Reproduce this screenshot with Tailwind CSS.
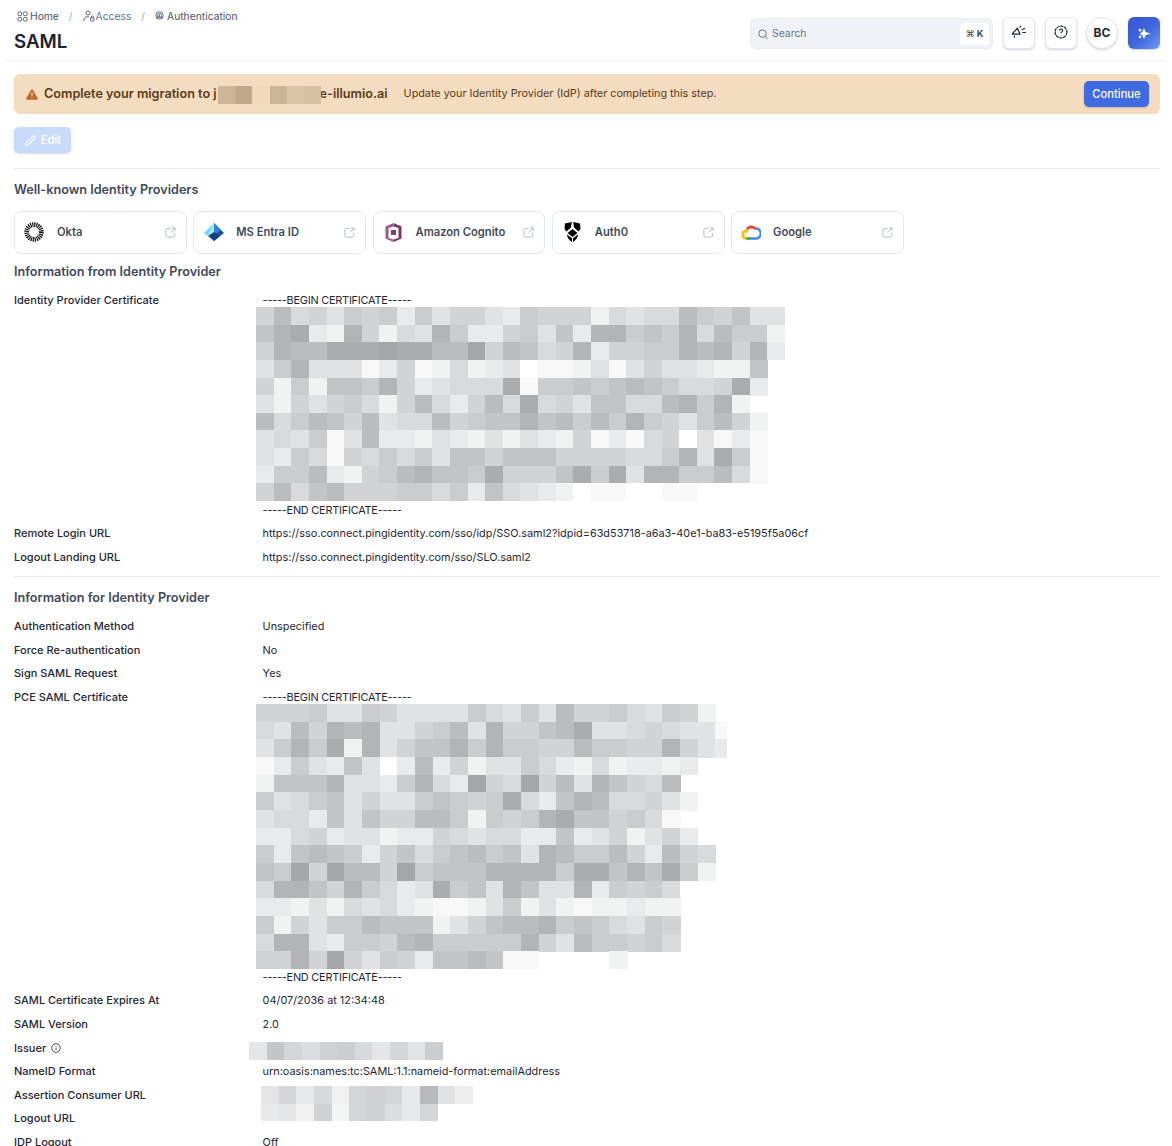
<!doctype html>
<html>
<head>
<meta charset="utf-8">
<script src="https://cdn.jsdelivr.net/npm/@tailwindcss/browser@4"></script>
</head>
<body class="bg-white">
<div class="w-[1172px] h-[1146px] overflow-hidden font-['Inter',sans-serif] text-[11px] leading-[14px] text-[#1f2733]">

  <header class="mx-[6px] h-[61px] border-b border-[#eef0f3] flex justify-between">
    <div class="pl-[8px]">
      <nav class="flex items-center h-[14px] mt-[9px] pl-[3px] text-[#4a5568] text-[10.3px]">
        <svg class="w-[11px] h-[11px] mr-[2px]" viewBox="0 0 12 12" fill="none" stroke="#4a5568" stroke-width="1"><rect x="1" y="1" width="4" height="4" rx="1.4"/><rect x="7" y="1" width="4" height="4" rx="1.4"/><rect x="1" y="7" width="4" height="4" rx="1.4"/><rect x="7" y="7" width="4" height="4" rx="1.4"/></svg>
        <span>Home</span>
        <span class="ml-[10px] mr-[10px] text-[#a0aec0]">/</span>
        <svg class="w-[12px] h-[12px] mr-[1px]" viewBox="0 0 12 12" fill="none" stroke="#4a5568" stroke-width="0.9"><circle cx="5" cy="3" r="2"/><path d="M1 11v-1.500a3.500 3 0 0 1 5-2.500"/><rect x="7.500" y="8" width="3.500" height="3" rx="0.600"/><path d="M8.300 8V7a1 1 0 0 1 2 0v1"/></svg>
        <span class="text-[#64748b]">Access</span>
        <span class="ml-[10px] mr-[10px] text-[#a0aec0]">/</span>
        <svg class="w-[9px] h-[9px] mr-[3px] -mt-[2px]" viewBox="0 0 12 12" fill="none" stroke="#4a5568" stroke-width="1.100"><circle cx="6" cy="6" r="5"/><circle cx="6" cy="6" r="2.800"/><path d="M6 4.500v4M3 10l1-4M9 10l-.5-3"/></svg>
        <span>Authentication</span>
      </nav>
      <h1 class="text-[18.7px] leading-[24px] font-semibold mt-[7px] text-[#1c2430]">SAML</h1>
    </div>
    <div class="flex items-start pt-[17px] pr-[6px]">
      <div class="w-[243px] h-[31px] mt-[1px] rounded-[6px] bg-[#eff2f6] flex items-center pl-[8px] pr-[4px] shadow-[inset_0_0_0_1px_#e9edf2]">
        <svg class="w-[10px] h-[10px] mr-[4px]" viewBox="0 0 12 12" fill="none" stroke="#64748b" stroke-width="1.200"><circle cx="5.500" cy="5.500" r="4.500"/><path d="M9 9l2.200 2.200"/></svg>
        <span class="text-[#64748b] text-[10.4px]">Search</span>
        <span class="ml-auto w-[29px] h-[22px] bg-white rounded-[4px] flex items-center justify-center gap-[2px] text-[9.6px] font-semibold text-[#374151]"><span class="font-['DejaVu_Sans',sans-serif] text-[9px] font-normal">⌘</span>K</span>
      </div>
      <button class="ml-[10px] w-[32px] h-[32px] rounded-[6px] bg-white border border-[#e4e7ec] shadow-[0_1px_2px_rgba(16,24,40,0.2)] flex items-center justify-center">
        <svg class="w-[16px] h-[15px] -mt-[2px]" viewBox="0 0 15 14" fill="none" stroke="#1f2733" stroke-width="1.100"><path d="M1 8.500L6 3l2.500 5.500z" stroke-linejoin="round"/><path d="M3 10l.3 1.800M9 .8l-.8 1.700M10 4.500l3-1.500M10.500 7H14"/></svg>
      </button>
      <button class="ml-[10px] w-[32px] h-[32px] rounded-[6px] bg-white border border-[#e4e7ec] shadow-[0_1px_2px_rgba(16,24,40,0.2)] flex items-center justify-center">
        <svg class="w-[14px] h-[14px] -mt-[2px]" viewBox="0 0 13 13" fill="none" stroke="#1f2733" stroke-width="1.100"><circle cx="6.500" cy="6.500" r="5.500" stroke-dasharray="3 .5"/><path d="M5 5.200a1.500 1.500 0 1 1 2.200 1.300c-.5.300-.7.500-.7 1"/><path d="M6.500 9.200v.3"/></svg>
      </button>
      <button class="ml-[9px] w-[32px] h-[32px] rounded-full bg-white border border-[#e4e7ec] shadow-[0_1px_2px_rgba(16,24,40,0.2)] flex items-center justify-center text-[12px] font-bold text-[#1f2733]">BC</button>
      <button class="ml-[10px] w-[32px] h-[32px] rounded-[6px] bg-gradient-to-br from-[#3a57d4] via-[#3f64dc] to-[#6f9af0] shadow-[0_1px_2px_rgba(16,24,40,0.2)] flex items-center justify-center">
        <svg class="w-[13px] h-[13px]" viewBox="0 0 12 12" fill="#fff"><path d="M5.500 1L7 4.500 11.500 6 7 7.500 5.500 11 4 7.500 1.500 6 4 4.500z"/><rect x=".8" y="1.800" width="2.200" height="2.200"/><rect x=".8" y="8" width="2.200" height="2.200"/></svg>
      </button>
    </div>
  </header>

  <main class="pl-[14px] w-[1160px]">
    <div class="mt-[13px] h-[40px] rounded-[6px] bg-[#f3dcc0] flex items-center pl-[12px] pr-[11px]">
      <svg class="w-[12px] h-[11px] mr-[6px]" viewBox="0 0 12 11"><path fill="#b8662a" d="M6 .5c.4 0 .7.2.9.5l4.800 8.200c.4.700-.1 1.500-.9 1.500H1.200c-.8 0-1.300-.8-.9-1.500L5.100 1c.2-.3.5-.5.9-.5z"/><rect x="5.400" y="3.400" width="1.200" height="3.600" fill="#f3dcc0"/><rect x="5.400" y="7.900" width="1.200" height="1.200" fill="#f3dcc0"/></svg>
      <span class="relative text-[12.65px] font-semibold text-[#5b3a17] whitespace-nowrap">Complete your migration to j<span class="inline-block w-[103px]"></span>e-illumio.ai
        <span class="absolute left-[174px] -top-[1px] h-[18px] w-[103px] flex">
          <i class="flex-1 bg-[#ccb598]"></i><i class="flex-1 bg-[#c0a888]"></i><i class="flex-1 bg-[#f0dabe]"></i><i class="flex-1 bg-[#ccb598]"></i><i class="flex-1 bg-[#dcc4a6]"></i><i class="flex-1 bg-[#d8c0a2]"></i>
        </span>
      </span>
      <span class="ml-[16px] text-[10.8px] text-[#5b3a17]">Update your Identity Provider (IdP) after completing this step.</span>
      <button class="ml-auto w-[65px] h-[26px] rounded-[5px] bg-[#3f6ae0] text-white text-[11.2px] font-medium shadow-[0_1px_2px_rgba(16,24,40,0.2)]">Continue</button>
    </div>

    <button class="mt-[13px] w-[57px] h-[26px] rounded-[5px] bg-[#c9dbfb] text-white font-medium text-[11.2px] flex items-center justify-center gap-[5px] pl-[1px] shadow-[0_1px_2px_rgba(16,24,40,0.15)]">
      <svg class="w-[11px] h-[11px]" viewBox="0 0 12 12" fill="none" stroke="#fff" stroke-width="1.200"><path d="M1 11l.7-3L8.500 1.200a1.200 1.200 0 0 1 1.700 0l.6.6a1.200 1.200 0 0 1 0 1.700L4 10.300z" stroke-linejoin="round"/></svg>
      Edit
    </button>

    <div class="mt-[15px] border-t border-[#e8ebef]"></div>

    <h2 class="mt-[13px] text-[12.65px] leading-[16px] font-semibold text-[#3f4a5a]">Well-known Identity Providers</h2>

    <div class="mt-[13px] w-[890px] grid grid-cols-5 gap-[6.4px] text-[11.2px]">
      <a class="h-[43px] rounded-[8px] border border-[#e2e8f0] flex items-center pl-[9px] pr-[10px] pb-[1px] font-semibold text-[#3f4a5a]">
        <svg class="w-[20px] h-[20px] mr-[13px] shrink-0" viewBox="0 0 20 20" fill="none" stroke="#111"><circle cx="10" cy="10" r="7.300" stroke-width="4.800" stroke-dasharray="1.150 .76"/></svg>
        Okta
        <svg class="ml-auto w-[11px] h-[11px] shrink-0" viewBox="0 0 12 12" fill="none" stroke="#a9b8cc" stroke-width="1"><path d="M6 1.500H2.500a1.500 1.500 0 0 0-1.500 1.500v6.500A1.500 1.500 0 0 0 2.500 11H9a1.500 1.500 0 0 0 1.500-1.500V6.500M7.500 1H11v3.500M11 1L6 6"/></svg>
      </a>
      <a class="h-[43px] rounded-[8px] border border-[#e2e8f0] flex items-center pl-[10px] pr-[10px] pb-[1px] font-semibold text-[#3f4a5a]">
        <svg class="w-[20px] h-[18px] mr-[12px] shrink-0" viewBox="0 0 20 18"><path fill="#225086" d="M10 0l10 10-10 8z"/><path fill="#66ddff" d="M10 0L0 10l4 3z"/><path fill="#a8e6fb" d="M10 0v9l-6 4z"/><path fill="#2d86d9" d="M10 0l6 7-6 6z"/><path fill="#14408a" d="M4 13l6 5 6-5-6-4z"/></svg>
        MS Entra ID
        <svg class="ml-auto w-[11px] h-[11px] shrink-0" viewBox="0 0 12 12" fill="none" stroke="#a9b8cc" stroke-width="1"><path d="M6 1.500H2.500a1.500 1.500 0 0 0-1.500 1.500v6.500A1.500 1.500 0 0 0 2.500 11H9a1.500 1.500 0 0 0 1.500-1.500V6.500M7.500 1H11v3.500M11 1L6 6"/></svg>
      </a>
      <a class="h-[43px] rounded-[8px] border border-[#e2e8f0] flex items-center pl-[11px] pr-[10px] pb-[1px] font-semibold text-[#3f4a5a]">
        <svg class="w-[17px] h-[19px] mr-[14px] shrink-0" viewBox="0 0 17 19"><path fill="#6e3a63" d="M8.500 0L16.500 3.500v12L8.500 19 8.500 16.500l5-1.500V5l-5-1.500z"/><path fill="#9c5a8c" d="M8.500 0L.5 3.500v12L8.500 19v-2.500l-5-1.500V5l5-1.500z"/><rect x="6" y="7" width="5" height="5" fill="#7b3f6e"/></svg>
        Amazon Cognito
        <svg class="ml-auto w-[11px] h-[11px] shrink-0" viewBox="0 0 12 12" fill="none" stroke="#a9b8cc" stroke-width="1"><path d="M6 1.500H2.500a1.500 1.500 0 0 0-1.500 1.500v6.500A1.500 1.500 0 0 0 2.500 11H9a1.500 1.500 0 0 0 1.500-1.500V6.500M7.500 1H11v3.500M11 1L6 6"/></svg>
      </a>
      <a class="h-[43px] rounded-[8px] border border-[#e2e8f0] flex items-center pl-[11px] pr-[10px] pb-[1px] font-semibold text-[#3f4a5a]">
        <svg class="w-[17px] h-[20px] mr-[14px] shrink-0" viewBox="0 0 17 20"><path fill="#000" d="M1 1.500L7.800 0 7 5.500 2.500 9.500 .5 7zM16 1.500L9.200 0 10 5.500l4.500 4 2-2.500zM3.500 11l5-4 5 4-5 4zM2.800 12.300l5.200 4V20C5 18.500 3.300 15.500 2.800 12.300zM14.200 12.300l-5.200 4V20c3-1.500 4.700-4.500 5.200-7.700z"/></svg>
        Auth0
        <svg class="ml-auto w-[11px] h-[11px] shrink-0" viewBox="0 0 12 12" fill="none" stroke="#a9b8cc" stroke-width="1"><path d="M6 1.500H2.500a1.500 1.500 0 0 0-1.500 1.500v6.500A1.500 1.500 0 0 0 2.500 11H9a1.500 1.500 0 0 0 1.500-1.500V6.500M7.500 1H11v3.500M11 1L6 6"/></svg>
      </a>
      <a class="h-[43px] rounded-[8px] border border-[#e2e8f0] flex items-center pl-[9px] pr-[10px] pb-[1px] font-semibold text-[#3f4a5a]">
        <svg class="w-[20px] h-[16px] mr-[12px] shrink-0" viewBox="0 0 20 16" fill="none" stroke-width="2.600"><path stroke="#ea4335" d="M6 5.500A5 5 0 0 1 14.500 5"/><path stroke="#4285f4" d="M14 4.500a5 5 0 0 1 1.500 10H9"/><path stroke="#34a853" d="M9.500 14.500H5"/><path stroke="#fbbc05" d="M5.500 14.500A4 4 0 0 1 4.500 6.700l2.500 1.500"/></svg>
        Google
        <svg class="ml-auto w-[11px] h-[11px] shrink-0" viewBox="0 0 12 12" fill="none" stroke="#a9b8cc" stroke-width="1"><path d="M6 1.500H2.500a1.500 1.500 0 0 0-1.500 1.500v6.500A1.500 1.500 0 0 0 2.500 11H9a1.500 1.500 0 0 0 1.500-1.500V6.500M7.500 1H11v3.500M11 1L6 6"/></svg>
      </a>
    </div>

    <h2 class="mt-[10px] text-[12.65px] leading-[16px] font-semibold text-[#3f4a5a]">Information from Identity Provider</h2>

    <dl class="mt-[8.5px] [&_dd]:text-[10.88px]">
      <div class="flex py-[4.8px]">
        <dt class="w-[248.6px] shrink-0 font-medium">Identity Provider Certificate</dt>
        <dd>
          <div class="tracking-[-0.21px]">-----BEGIN CERTIFICATE-----</div>
          <svg id="m1" class="block -ml-[6.600px]" width="529" height="194" viewBox="0 0 529 194" shape-rendering="crispEdges"></svg>
          <div class="mt-[1.500px] tracking-[-0.21px]">-----END CERTIFICATE-----</div>
        </dd>
      </div>
      <div class="flex py-[4.8px]"><dt class="w-[248.6px] shrink-0 font-medium">Remote Login URL</dt><dd>https://sso.connect.pingidentity.com/sso/idp/SSO.saml2?idpid=63d53718-a6a3-40e1-ba83-e5195f5a06cf</dd></div>
      <div class="flex py-[4.8px]"><dt class="w-[248.6px] shrink-0 font-medium">Logout Landing URL</dt><dd>https://sso.connect.pingidentity.com/sso/SLO.saml2</dd></div>
    </dl>

    <div class="mt-[7px] border-t border-[#e8ebef]"></div>

    <h2 class="mt-[13px] text-[12.65px] leading-[16px] font-semibold text-[#3f4a5a]">Information for Identity Provider</h2>

    <dl class="mt-[8.5px] [&_dd]:text-[10.88px]">
      <div class="flex py-[4.8px]"><dt class="w-[248.6px] shrink-0 font-medium">Authentication Method</dt><dd>Unspecified</dd></div>
      <div class="flex py-[4.8px]"><dt class="w-[248.6px] shrink-0 font-medium">Force Re-authentication</dt><dd>No</dd></div>
      <div class="flex py-[4.8px]"><dt class="w-[248.6px] shrink-0 font-medium">Sign SAML Request</dt><dd>Yes</dd></div>
      <div class="flex py-[4.8px]">
        <dt class="w-[248.6px] shrink-0 font-medium">PCE SAML Certificate</dt>
        <dd>
          <div class="tracking-[-0.21px]">-----BEGIN CERTIFICATE-----</div>
          <svg id="m2" class="block -ml-[6.600px]" width="471" height="265" viewBox="0 0 471 265" shape-rendering="crispEdges"></svg>
          <div class="mt-[1px] tracking-[-0.21px]">-----END CERTIFICATE-----</div>
        </dd>
      </div>
      <div class="flex py-[4.8px]"><dt class="w-[248.6px] shrink-0 font-medium">SAML Certificate Expires At</dt><dd>04/07/2036 at 12:34:48</dd></div>
      <div class="flex py-[4.8px]"><dt class="w-[248.6px] shrink-0 font-medium">SAML Version</dt><dd>2.0</dd></div>
      <div class="flex py-[4.8px] relative">
        <dt class="w-[248.6px] shrink-0 font-medium flex items-center gap-[5px]">Issuer
          <svg class="w-[10px] h-[10px]" viewBox="0 0 10 10" fill="none" stroke="#1f2733" stroke-width="0.800"><circle cx="5" cy="5" r="4.300"/><path d="M5 4.500v2.600M5 2.800v.6"/></svg>
        </dt>
        <dd class="absolute left-[235px] top-[6.600px] w-[194px] h-[18px] flex">
          <i class="flex-1 bg-[#e4e5e7]"></i><i class="flex-1 bg-[#c4c5c7]"></i><i class="flex-1 bg-[#d4d5d7]"></i><i class="flex-1 bg-[#dcdde0]"></i><i class="flex-1 bg-[#d0d1d3]"></i><i class="flex-1 bg-[#cccdcf]"></i><i class="flex-1 bg-[#d8d9dc]"></i><i class="flex-1 bg-[#e4e5e7]"></i><i class="flex-1 bg-[#d4d5d7]"></i><i class="flex-1 bg-[#e2e3e5]"></i><i class="flex-1 bg-[#cccdcf]"></i>
        </dd>
      </div>
      <div class="flex py-[4.8px]"><dt class="w-[248.6px] shrink-0 font-medium">NameID Format</dt><dd>urn:oasis:names:tc:SAML:1.1:nameid-format:emailAddress</dd></div>
      <div class="flex py-[4.8px] relative">
        <dt class="w-[248.6px] shrink-0 font-medium">Assertion Consumer URL</dt>
        <dd class="absolute left-[247px] top-[3px] w-[212px] h-[18px] flex">
          <i class="flex-1 bg-[#e4e4e6]"></i><i class="flex-1 bg-[#d4d5d7]"></i><i class="flex-1 bg-[#e8e9ea]"></i><i class="flex-1 bg-[#d8d9db]"></i><i class="flex-1 bg-[#f0f0f1]"></i><i class="flex-1 bg-[#d4d5d7]"></i><i class="flex-1 bg-[#d0d1d3]"></i><i class="flex-1 bg-[#d4d5d7]"></i><i class="flex-1 bg-[#e8e9ea]"></i><i class="flex-1 bg-[#b8b9bb]"></i><i class="flex-1 bg-[#e0e1e3]"></i><i class="flex-1 bg-[#eeeeef]"></i>
        </dd>
      </div>
      <div class="flex py-[4.8px] relative">
        <dt class="w-[248.6px] shrink-0 font-medium">Logout URL</dt>
        <dd class="absolute left-[247px] -top-[2.400px] w-[176.500px] h-[17px] flex">
          <i class="flex-1 bg-[#e8e9ea]"></i><i class="flex-1 bg-[#e4e5e6]"></i><i class="flex-1 bg-[#f0f0f1]"></i><i class="flex-1 bg-[#d0d1d3]"></i><i class="flex-1 bg-[#f4f5f5]"></i><i class="flex-1 bg-[#d4d5d7]"></i><i class="flex-1 bg-[#d0d1d3]"></i><i class="flex-1 bg-[#dcdde0]"></i><i class="flex-1 bg-[#e8e9ea]"></i><i class="flex-1 bg-[#d4d5d7]"></i>
        </dd>
      </div>
      <div class="flex py-[4.8px]"><dt class="w-[248.6px] shrink-0 font-medium">IDP Logout</dt><dd>Off</dd></div>
    </dl>
  </main>
</div>
<script>
  var G={'0':'#a5a6a8','1':'#abacae','2':'#b3b4b6','3':'#bbbcbe','4':'#c3c4c6','5':'#cbcccd','6':'#d2d3d5','7':'#d9dadc','8':'#e1e2e4','9':'#e9eaeb','a':'#f1f2f2','b':'#f8f8f8','c':'#ffffff'};
  function draw(id,rows,w,h){
    var s='';
    rows.forEach(function(r,y){
      r.split('').forEach(function(c,x){
        if(G[c]) s+='<rect x="'+(x*w)+'" y="'+(y*h)+'" width="'+(w+.5)+'" height="'+(h+.5)+'" fill="'+G[c]+'"/>';
      });
    });
    document.getElementById(id).innerHTML=s;
  }
  draw('m1',[
    '6376856595866895666a7877356488',
    '4219a26a782599658492254527355a',
    '623311101133063476296655232629',
    '852888b96ba7a98cbba8b86889aa4-',
    '6a5a44526987771b5545434577619-',
    '8a68657a6379637176844773252a--',
    '3753463877365442435352568536a-',
    '8785b8399a89a8a89a6b9b76c8b9b-',
    '8957b67575844644466667752815b-',
    '95539a6532445166641518225537b-',
    '63743666557594789acbbccbbccc--'
  ],17.633,17.636);
  draw('m2',[
    '6665885688885785836657856a-',
    '78362328865382664318876788b',
    '85251a286442525566355662689',
    'b958948c9396a88579a7a99a9--',
    'a44428895279067063824673---',
    '587548688545651794237768a--',
    '877948466335a5652144657b---',
    '9976988a9967877994986a869--',
    '59434596475435482355369367-',
    '4506033605444222251142415a-',
    '722462579815482488295657c--',
    '99a8a7879abba85a8abaa9aa---',
    '5a68553444a8643325457856---',
    '722895563255555268355657---',
    '66260685694434bb----a------'
  ],17.667,17.667);
</script>
</body>
</html>
